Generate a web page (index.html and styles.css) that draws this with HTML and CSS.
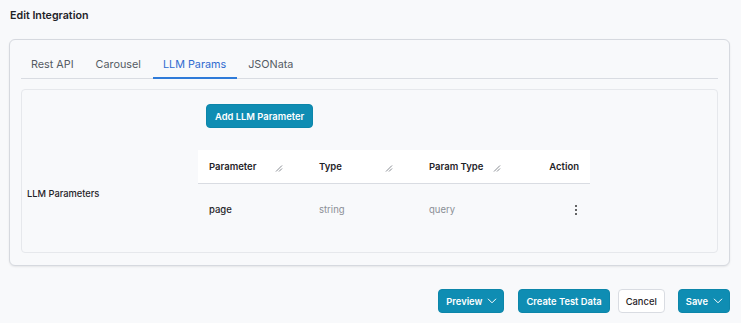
FILE: index.html
```html
<!DOCTYPE html>
<html>
<head>
<meta charset="utf-8">
<link rel="stylesheet" href="styles.css">
</head>
<body>
<div class="page">
  <div class="title">Edit Integration</div>
  <div class="card">
    <div class="tabs">
      <div class="tab">Rest API</div>
      <div class="tab">Carousel</div>
      <div class="tab active">LLM Params</div>
      <div class="tab">JSONata</div>
    </div>
    <div class="panel">
      <div class="label">LLM Parameters</div>
      <div class="content">
        <button class="btn add">Add LLM Parameter</button>
        <table class="grid">
          <thead>
            <tr>
              <th class="c1"><span>Parameter</span><svg class="rs" width="8" height="8" viewBox="0 0 8 8"><path d="M1 7.5L7 1.5M4 7.5L7 4.5" stroke="#7a7f86" stroke-width="0.9" fill="none"/></svg></th>
              <th class="c2"><span>Type</span><svg class="rs" width="8" height="8" viewBox="0 0 8 8"><path d="M1 7.5L7 1.5M4 7.5L7 4.5" stroke="#7a7f86" stroke-width="0.9" fill="none"/></svg></th>
              <th class="c3"><span>Param Type</span><svg class="rs" width="8" height="8" viewBox="0 0 8 8"><path d="M1 7.5L7 1.5M4 7.5L7 4.5" stroke="#7a7f86" stroke-width="0.9" fill="none"/></svg></th>
              <th class="c4">Action</th>
            </tr>
          </thead>
          <tbody>
            <tr>
              <td class="name">page</td>
              <td class="muted">string</td>
              <td class="muted">query</td>
              <td class="act"><span class="kebab"><b></b><b></b><b></b></span></td>
            </tr>
          </tbody>
        </table>
      </div>
    </div>
  </div>
  <div class="footer">
    <button class="btn drop preview">Preview <svg width="10" height="6" viewBox="0 0 10 6"><path d="M1 0.8l4 4 4-4" fill="none" stroke="#fff" stroke-width="1"/></svg></button>
    <button class="btn create">Create Test Data</button>
    <button class="btn ghost">Cancel</button>
    <button class="btn drop save">Save <svg width="10" height="6" viewBox="0 0 10 6"><path d="M1 0.8l4 4 4-4" fill="none" stroke="#fff" stroke-width="1"/></svg></button>
  </div>
</div>
</body>
</html>
```
FILE: styles.css
```css
* { box-sizing: border-box; }
html, body { margin: 0; padding: 0; background: #f8f9fb; }
body { font-family: Inter, "Noto Sans", sans-serif; color: #1f2328; font-size: 9.5px; }
.page { padding: 0 11px 0 9px; width: 741px; }
.title { font-weight: 600; font-size: 10.7px; height: 39px; padding-top: 9px; padding-left: 1px; }
.card {
  border: 1px solid #d6d9df; border-radius: 6px; background: #f8f9fb;
  box-shadow: 0 1px 2px rgba(0,0,0,0.08);
  padding: 12px 11px 12px 11px; height: 227px;
}
.tabs { display: flex; border-bottom: 1px solid #d9dce2; height: 27px; }
.tab { padding: 6px 11px 0 10px; color: #555b63; font-size: 10.8px; margin-right: 1px; }
.tab.active { color: #2f6ad0; border-bottom: 2px solid #2f7bd9; margin-bottom: -1px; }
.panel {
  margin-top: 10px; border: 1px solid #e6e8ec; border-radius: 4px; height: 164px;
  display: flex; background: #f8f9fb;
}
.label { width: 176px; padding: 98px 0 0 5px; font-weight: 500; font-size: 9.3px; }
.content { padding-top: 14px; }
.btn {
  font-family: inherit; background: #0f8db3; color: #fff; border: 1px solid #0c86aa;
  border-radius: 4px; font-weight: 600; font-size: 9.4px; height: 24px; padding: 0 8px;
  display: inline-flex; align-items: center; gap: 6px;
}
.add { margin-left: 8px; padding: 0 8px; }
.grid { border-collapse: collapse; margin-top: 22px; width: 392px; table-layout: fixed; }
.grid th {
  background: #fff; height: 33px; text-align: left; font-weight: 600; font-size: 9.5px;
  border-bottom: 1px solid #d9dce2; padding: 0 11px; position: relative;
}
.c1, .c2 { width: 110px; }
.c3 { width: 108px; }
.grid th.c4 { text-align: right; }
.rs { position: absolute; right: 25px; top: 14px; }
.grid td { height: 52px; padding: 0 11px; font-size: 9.5px; }
.grid td.name { font-weight: 500; }
.grid td.muted { color: #8a8f96; }
.grid td.act { text-align: right; padding-right: 13px; }
.kebab { display: inline-flex; flex-direction: column; gap: 2px; vertical-align: middle; }
.kebab b { width: 2px; height: 2px; background: #333; border-radius: 1px; display: block; }
.footer { display: flex; justify-content: flex-end; margin-top: 23px; }
.footer .btn { height: 24px; }
.btn.drop { gap: 5px; padding: 0 6px 0 7px; }
.preview { margin-right: 14px; padding: 0 6px 0 6px; }
.btn.create { margin-right: 8px; padding: 0 7px; }
.btn.ghost { background: #fff; color: #1f2328; border: 1px solid #d9dce2; font-weight: 500; padding: 0 7px; margin-right: 13px; }
```
